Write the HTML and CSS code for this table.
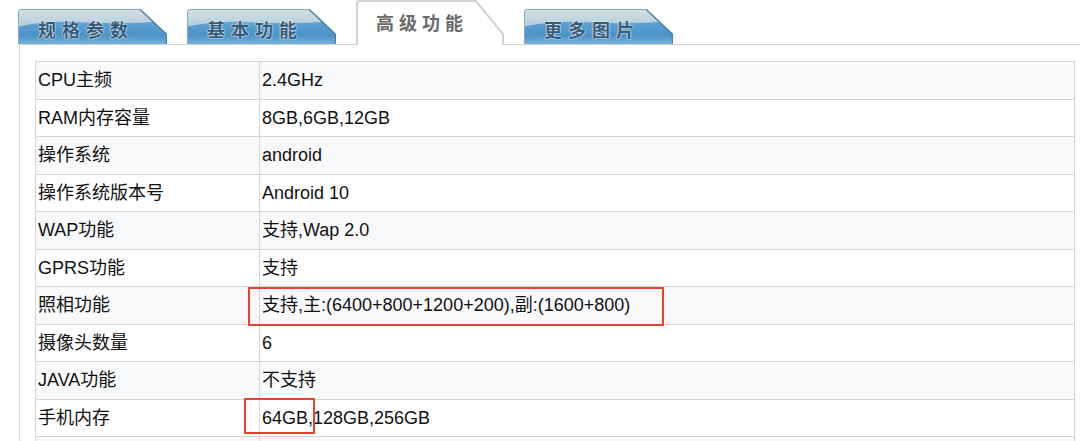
FILE: index.html
```html
<!DOCTYPE html>
<html lang="zh-CN">
<head>
<meta charset="utf-8">
<title>高级功能</title>
<link rel="stylesheet" href="styles.css">
</head>
<body>
<div class="page">
  <div class="tabs">
    <div class="tab">
      <svg class="tab-bg" viewBox="0 0 150 36" preserveAspectRatio="none" aria-hidden="true">
        <defs>
          <linearGradient id="blue" x1="0" y1="0" x2="0" y2="1">
            <stop offset="0" stop-color="#8fbde0"/>
            <stop offset="0.45" stop-color="#5a9fd1"/>
            <stop offset="0.75" stop-color="#4a92c7"/>
            <stop offset="1" stop-color="#78b2dc"/>
          </linearGradient>
          <linearGradient id="gloss" x1="0" y1="0" x2="0" y2="1">
            <stop offset="0" stop-color="#d6e0e4"/>
            <stop offset="1" stop-color="#b3cddc"/>
          </linearGradient>
          <clipPath id="tabclip">
            <path d="M0.5,36 V3 Q0.5,0.5 3,0.5 H123 L149.5,26 V36 Z"/>
          </clipPath>
        </defs>
        <path d="M0.5,36 V3 Q0.5,0.5 3,0.5 H123 L149.5,26 V36 Z" fill="url(#blue)"/>
        <path d="M0,0 H150 V12 Q110,16 70,14 Q30,11 0,18 Z" fill="url(#gloss)" clip-path="url(#tabclip)"/>
        <path d="M0.5,36 V3 Q0.5,0.5 3,0.5 H123 L149.5,26 V36" fill="none" stroke="#86a9c0" stroke-width="1"/>
        <path d="M123,0.5 L149.5,26 V36" fill="none" stroke="#4d80a4" stroke-width="1.5"/>
      </svg>
      <span class="tab-label">规格参数</span>
    </div>
    <div class="tab">
      <svg class="tab-bg" viewBox="0 0 150 36" preserveAspectRatio="none" aria-hidden="true">
        <path d="M0.5,36 V3 Q0.5,0.5 3,0.5 H123 L149.5,26 V36 Z" fill="url(#blue)"/>
        <path d="M0,0 H150 V12 Q110,16 70,14 Q30,11 0,18 Z" fill="url(#gloss)" clip-path="url(#tabclip)"/>
        <path d="M0.5,36 V3 Q0.5,0.5 3,0.5 H123 L149.5,26 V36" fill="none" stroke="#86a9c0" stroke-width="1"/>
        <path d="M123,0.5 L149.5,26 V36" fill="none" stroke="#4d80a4" stroke-width="1.5"/>
      </svg>
      <span class="tab-label">基本功能</span>
    </div>
    <div class="tab tab-active">
      <svg class="tab-bg" viewBox="0 0 148 45" preserveAspectRatio="none" aria-hidden="true">
        <path d="M1,45 V4 Q1,1 4,1 H120 L147,34 V45" fill="#ffffff" stroke="#d2d2d2" stroke-width="2"/>
      </svg>
      <span class="tab-label">高级功能</span>
    </div>
    <div class="tab">
      <svg class="tab-bg" viewBox="0 0 150 36" preserveAspectRatio="none" aria-hidden="true">
        <path d="M0.5,36 V3 Q0.5,0.5 3,0.5 H123 L149.5,26 V36 Z" fill="url(#blue)"/>
        <path d="M0,0 H150 V12 Q110,16 70,14 Q30,11 0,18 Z" fill="url(#gloss)" clip-path="url(#tabclip)"/>
        <path d="M0.5,36 V3 Q0.5,0.5 3,0.5 H123 L149.5,26 V36" fill="none" stroke="#86a9c0" stroke-width="1"/>
        <path d="M123,0.5 L149.5,26 V36" fill="none" stroke="#4d80a4" stroke-width="1.5"/>
      </svg>
      <span class="tab-label">更多图片</span>
    </div>
  </div>

  <div class="panel">
    <table class="spec">
      <tbody>
        <tr><td class="k">CPU主频</td><td>2.4GHz</td></tr>
        <tr><td class="k">RAM内存容量</td><td>8GB,6GB,12GB</td></tr>
        <tr><td class="k">操作系统</td><td>android</td></tr>
        <tr><td class="k">操作系统版本号</td><td>Android 10</td></tr>
        <tr><td class="k">WAP功能</td><td>支持,Wap 2.0</td></tr>
        <tr><td class="k">GPRS功能</td><td>支持</td></tr>
        <tr><td class="k">照相功能</td><td>支持,主:(6400+800+1200+200),副:(1600+800)</td></tr>
        <tr><td class="k">摄像头数量</td><td>6</td></tr>
        <tr><td class="k">JAVA功能</td><td>不支持</td></tr>
        <tr><td class="k">手机内存</td><td>64GB,128GB,256GB</td></tr>
        <tr><td class="k">&nbsp;</td><td>&nbsp;</td></tr>
      </tbody>
    </table>
    <div class="mark mark-camera"></div>
    <div class="mark mark-storage"></div>
  </div>
</div>
</body>
</html>
```

FILE: styles.css
```css
html, body {
  margin: 0;
  padding: 0;
  background: #ffffff;
}

body {
  font-family: "Liberation Sans", Arial, "Noto Sans CJK SC", sans-serif;
  color: #111111;
  height: 441px;
  overflow: hidden;
}

.page {
  width: 1080px;
}

.tabs {
  display: flex;
  align-items: flex-end;
  gap: 20px;
  height: 44px;
  padding-left: 18px;
  position: relative;
  z-index: 2;
}

.tab {
  position: relative;
  width: 149px;
  height: 35px;
  flex: none;
  display: flex;
  align-items: center;
}

.tab-bg {
  position: absolute;
  left: 0;
  top: 0;
  width: 100%;
  height: 100%;
}

.tab-label {
  position: relative;
  padding-left: 20px;
  padding-top: 4px;
  font-family: "Noto Sans CJK SC", sans-serif;
  font-size: 18px;
  font-weight: 700;
  letter-spacing: 6px;
  color: #355a77;
  text-shadow: 0 0 2px #ffffff, 0 0 1px #ffffff;
  line-height: 1;
}

.tab-active {
  height: 45px;
  width: 148px;
  margin-bottom: -1px;
}

.tab-active .tab-label {
  padding-top: 0;
  padding-bottom: 2px;
  color: #6a6a6a;
  letter-spacing: 5px;
  text-shadow: none;
}

.panel {
  position: relative;
  margin-left: 19px;
  border-top: 1px solid #cfcfcf;
  border-left: 1px solid #d8d8d8;
  padding: 16px 0 0 15px;
}

.spec {
  width: 1040px;
  border-collapse: collapse;
  border: 1px solid #d6d6d6;
  font-size: 18px;
}

.spec td {
  border: 1px solid #d6d6d6;
  height: 37.5px;
  padding: 0 0 0 2px;
  vertical-align: middle;
  white-space: nowrap;
  line-height: 20px;
  box-sizing: border-box;
}

.spec td.k {
  width: 224px;
}

.spec tr:nth-child(odd) td {
  background: #f8f9fb;
}

.mark {
  position: absolute;
  border: 2px solid #e4432d;
  box-sizing: border-box;
}

.mark-camera {
  left: 228px;
  top: 242px;
  width: 416px;
  height: 39px;
}

.mark-storage {
  left: 224px;
  top: 353px;
  width: 71px;
  height: 36px;
}
```
